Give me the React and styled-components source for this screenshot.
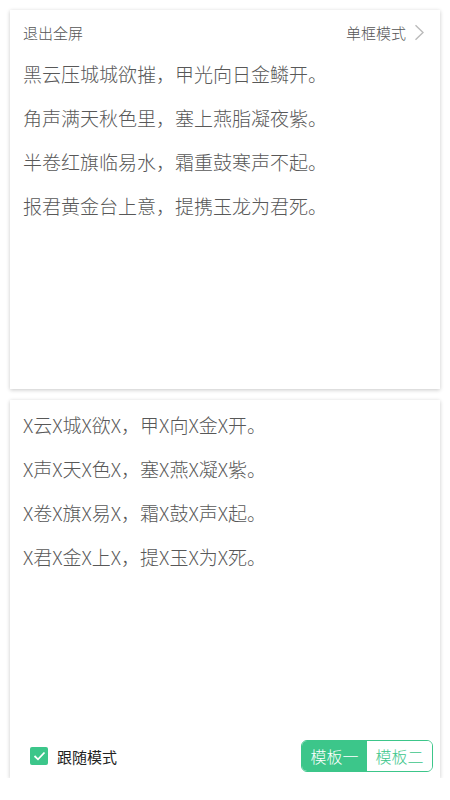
import React, { useState } from "react";
import styled, { createGlobalStyle } from "styled-components";

const GlobalStyle = createGlobalStyle`
  html, body {
    margin: 0;
    padding: 0;
    background: #fff;
  }
  body {
    font-family: "Noto Sans CJK SC", "Noto Sans", sans-serif;
  }
`;

const GREEN = "#3cc68a";

const Page = styled.div`
  display: flex;
  flex-direction: column;
  gap: 11px;
  padding: 10px 10px 0;
  width: 430px;
`;

const Card = styled.div`
  display: flex;
  flex-direction: column;
  height: ${(p) => p.h}px;
  background: #fff;
  box-shadow: 0 1px 4px rgba(0, 0, 0, 0.22);
  padding: ${(p) => p.pt || 0}px 13px 0;
  box-sizing: border-box;
`;

const TopBar = styled.div`
  display: flex;
  align-items: center;
  justify-content: space-between;
  height: 42px;
  padding-top: 2px;
  box-sizing: border-box;
  font-size: 15px;
  font-weight: 300;
  color: #555;
`;

const ModeLink = styled.div`
  display: flex;
  align-items: center;
  gap: 8px;
  padding-right: 2px;
`;

const Line = styled.p`
  margin: 0;
  font-size: 19px;
  font-weight: 300;
  line-height: 44px;
  color: #585858;
  white-space: nowrap;
`;

const Lines = styled.div`
  flex: 1;
`;

const Footer = styled.div`
  display: flex;
  align-items: center;
  justify-content: space-between;
  margin-right: -6px;
  padding: 0 0 6px 7px;
`;

const Follow = styled.label`
  display: flex;
  align-items: center;
  gap: 9px;
  font-size: 15px;
  color: #222;
`;

const Box = styled.span`
  display: flex;
  align-items: center;
  justify-content: center;
  width: 18px;
  height: 18px;
  border-radius: 2px;
  background: ${GREEN};
`;

const Segments = styled.div`
  display: flex;
  height: 32px;
  border: 1px solid ${GREEN};
  border-radius: 6px;
  overflow: hidden;
  box-sizing: border-box;
`;

const Segment = styled.button`
  width: 65px;
  border: none;
  padding: 0;
  font-family: inherit;
  font-size: 16px;
  font-weight: 300;
  background: ${(p) => (p.active ? GREEN : "#fff")};
  color: ${(p) => (p.active ? "#fff" : GREEN)};
`;

const poem = [
  "黑云压城城欲摧，甲光向日金鳞开。",
  "角声满天秋色里，塞上燕脂凝夜紫。",
  "半卷红旗临易水，霜重鼓寒声不起。",
  "报君黄金台上意，提携玉龙为君死。",
];

const masked = [
  "X云X城X欲X，甲X向X金X开。",
  "X声X天X色X，塞X燕X凝X紫。",
  "X卷X旗X易X，霜X鼓X声X起。",
  "X君X金X上X，提X玉X为X死。",
];

export default function App() {
  const [tpl, setTpl] = useState(0);
  return (
    <>
      <GlobalStyle />
      <Page>
        <Card h={379}>
          <TopBar>
            <span>退出全屏</span>
            <ModeLink>
              单框模式
              <svg width="11" height="17" viewBox="0 0 11 17">
                <path d="M1.5 1.2 L9 8.5 L1.5 15.8" fill="none" stroke="#bbb" strokeWidth="1.4" />
              </svg>
            </ModeLink>
          </TopBar>
          <Lines>
            {poem.map((l) => (
              <Line key={l}>{l}</Line>
            ))}
          </Lines>
        </Card>
        <Card h={378} pt={3}>
          <Lines>
            {masked.map((l) => (
              <Line key={l}>{l}</Line>
            ))}
          </Lines>
          <Footer>
            <Follow>
              <Box>
                <svg width="13" height="10" viewBox="0 0 13 10">
                  <path d="M1.5 5 L5 8.3 L11.5 1.5" fill="none" stroke="#fff" strokeWidth="1.8" />
                </svg>
              </Box>
              跟随模式
            </Follow>
            <Segments>
              <Segment active={tpl === 0} onClick={() => setTpl(0)}>模板一</Segment>
              <Segment active={tpl === 1} onClick={() => setTpl(1)}>模板二</Segment>
            </Segments>
          </Footer>
        </Card>
      </Page>
    </>
  );
}
